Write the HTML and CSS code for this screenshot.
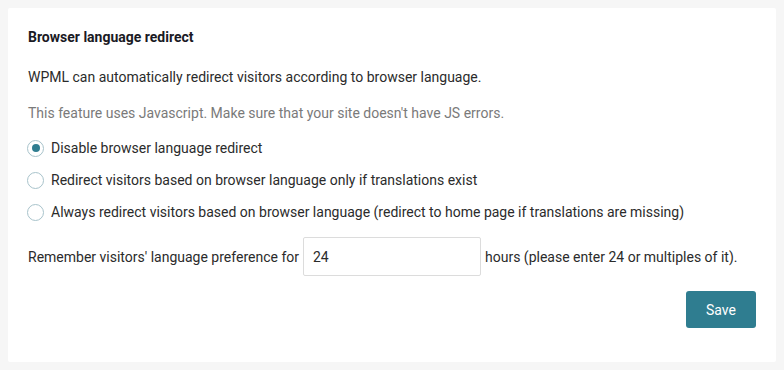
FILE: index.html
```html
<!DOCTYPE html>
<html lang="en">
<head>
  <meta charset="UTF-8">
  <title>WPML - Browser language redirect</title>
  <link rel="stylesheet" href="styles.css">
</head>
<body>
  <div class="card">
    <h3 class="card-title">Browser language redirect</h3>
    <p class="intro">WPML can automatically redirect visitors according to browser language.</p>
    <p class="note">This feature uses Javascript. Make sure that your site doesn't have JS errors.</p>

    <div class="options">
      <label class="option">
        <input type="radio" name="redirect" value="0" checked>
        <span>Disable browser language redirect</span>
      </label>
      <label class="option">
        <input type="radio" name="redirect" value="1">
        <span>Redirect visitors based on browser language only if translations exist</span>
      </label>
      <label class="option">
        <input type="radio" name="redirect" value="2">
        <span>Always redirect visitors based on browser language (redirect to home page if translations are missing)</span>
      </label>
    </div>

    <div class="remember-row">
      <span>Remember visitors' language preference for</span>
      <input type="text" class="hours-input" value="24">
      <span>hours (please enter 24 or multiples of it).</span>
    </div>

    <div class="actions">
      <button class="save-btn">Save</button>
    </div>
  </div>
</body>
</html>
```

FILE: styles.css
```css
body {
  font-family: Roboto, "Liberation Sans", Arial, sans-serif;
  background-color: #f6f6f6;
  margin: 8px;
  color: #2b2b2b;
  font-size: 14px;
}
.card {
  background-color: #fff;
  padding: 20px 20px 34px;
  border-radius: 2px;
}
.card-title {
  margin: 0 0 21px;
  font-size: 14px;
  line-height: 18px;
  font-weight: bold;
  color: #1a1a24;
}
.intro {
  margin: 0 0 16px;
  line-height: 20px;
}
.note {
  margin: 0 0 15px;
  line-height: 20px;
  color: #7a7a7a;
}
.options {
  display: flex;
  flex-direction: column;
  gap: 12px;
  margin-bottom: 15px;
}
.option {
  display: flex;
  align-items: center;
  gap: 7px;
  line-height: 20px;
  cursor: pointer;
}
.option input {
  appearance: none;
  -webkit-appearance: none;
  width: 17px;
  height: 17px;
  margin: 0 0 0 -1px;
  border: 1px solid #a8c3cb;
  border-radius: 50%;
  background: #fff;
  display: flex;
  align-items: center;
  justify-content: center;
  flex-shrink: 0;
}
.option input:checked::after {
  content: "";
  width: 8px;
  height: 8px;
  border-radius: 50%;
  background-color: #2f7d90;
}
.remember-row {
  display: flex;
  align-items: center;
  gap: 4px;
  margin-bottom: 15px;
}
.hours-input {
  width: 178px;
  height: 39px;
  box-sizing: border-box;
  padding: 0 9px;
  border: 1px solid #dcdcdc;
  border-radius: 2px;
  font-family: inherit;
  font-size: 14px;
  color: #2b2b2b;
  outline: none;
}
.actions {
  display: flex;
  justify-content: flex-end;
}
.save-btn {
  width: 70px;
  height: 37px;
  border: none;
  border-radius: 3px;
  background-color: #2f7d90;
  color: #fff;
  font-family: inherit;
  font-size: 14px;
  cursor: pointer;
}
```
